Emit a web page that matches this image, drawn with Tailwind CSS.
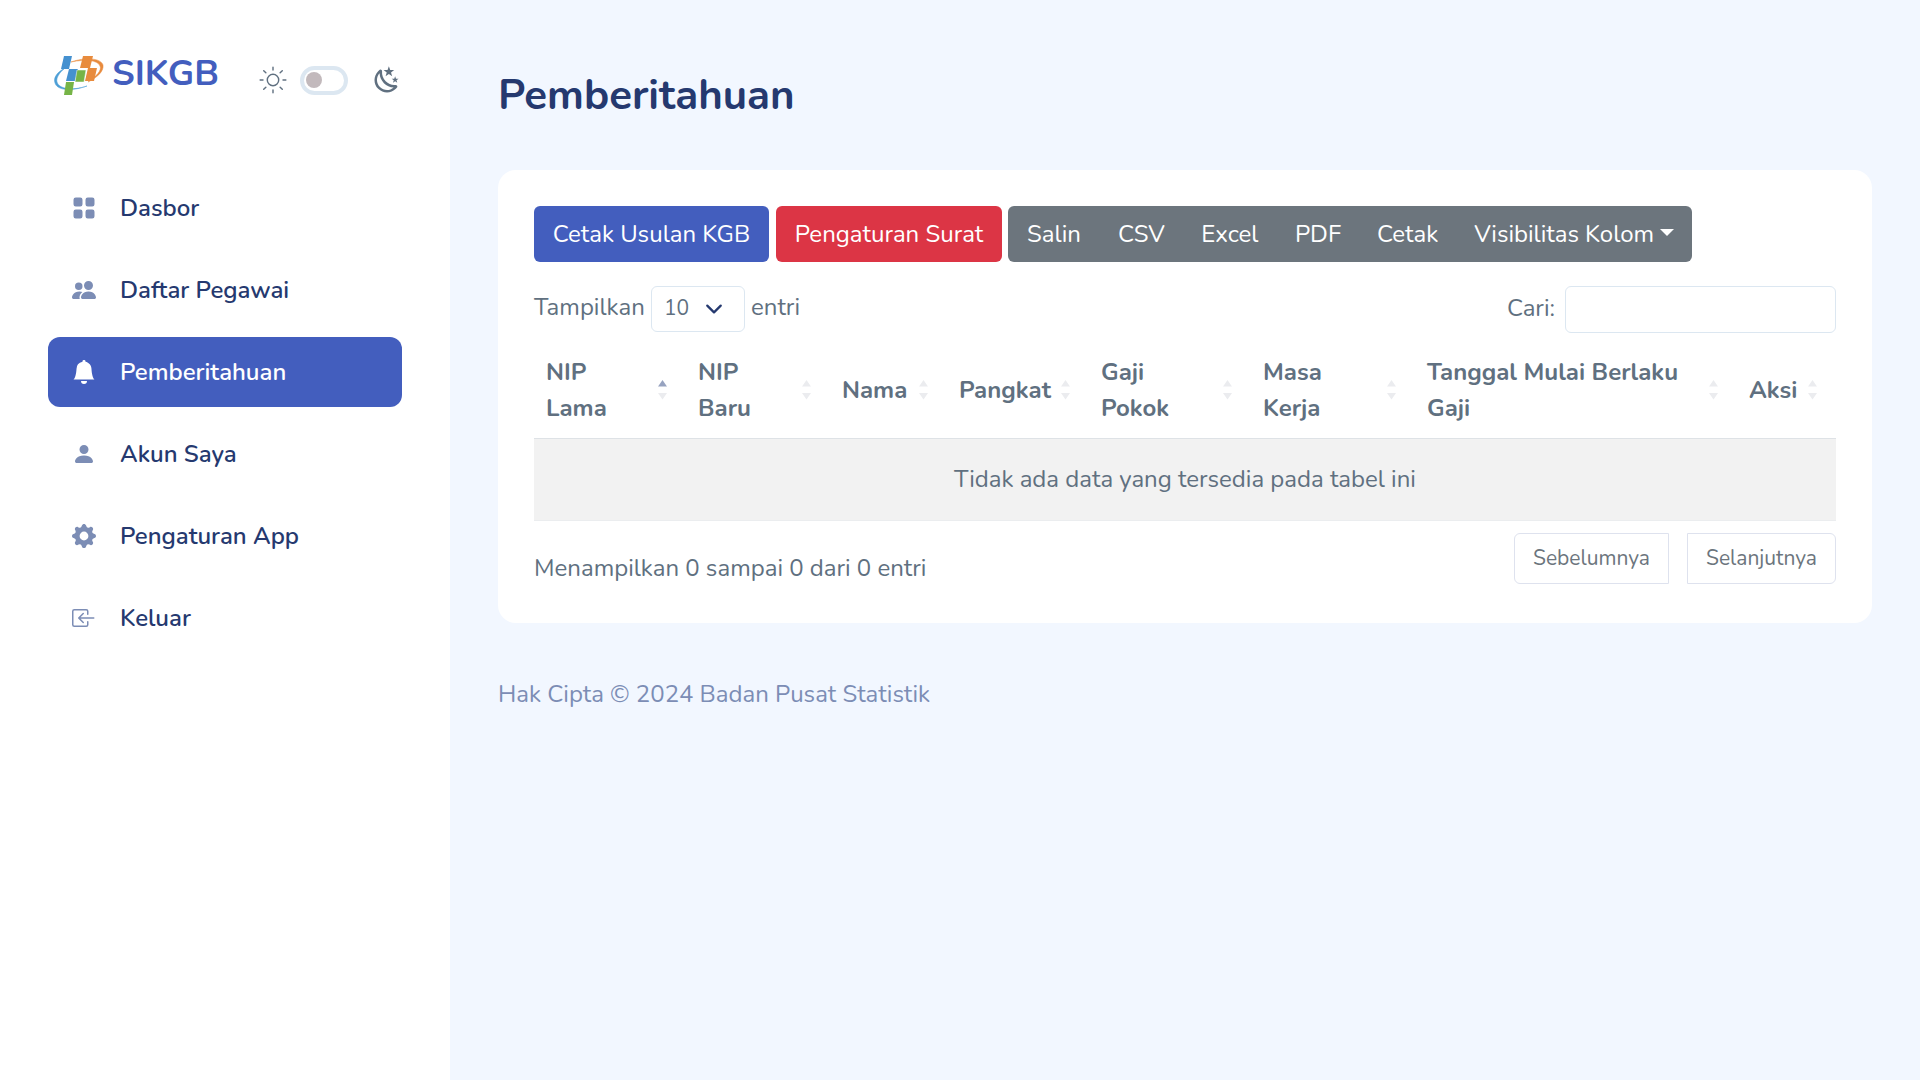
<!DOCTYPE html>
<html lang="id">
<head>
    <meta charset="UTF-8">
    <meta name="viewport" content="width=device-width, initial-scale=1.0">
    <title>Pemberitahuan - SIKGB</title>
    <script src="https://cdn.jsdelivr.net/npm/@tailwindcss/browser@4"></script>
</head>
<body class="bg-[#f2f7ff] font-['Nunito','Lato',sans-serif] text-2xl leading-9 text-[#607080]">

    <div class="flex min-h-screen">
        <!-- Sidebar -->
        <aside class="w-[450px] shrink-0 bg-white px-12 pt-12">
            <div class="flex h-16 items-center">
                <a href="#" class="flex items-end gap-2 self-start pt-1 pl-[6px] text-4xl leading-[44px] font-bold text-[#435ebe]">
                    <svg class="h-10 w-[50px]" viewBox="0 0 50 40">
                        <path d="M11 12C3 16-1 22 1 27c2 7 15 9 32 3C18 35 5 33 3 26c-1-4 2-9 8-14z" fill="#4d9fd6" stroke="#4d9fd6" stroke-width=".5"/>
                        <path d="M17 6c14-5 30-4 32 3 1 6-5 12-15 17 9-6 14-12 12-16C44 4 31 3 17 6z" fill="#e88b3d" stroke="#e88b3d" stroke-width=".5"/>
                        <path d="M10 0h8l-3 13H7z" fill="#4591d0"/>
                        <path d="M15 13h9l-3 12h-9z" fill="#4591d0"/>
                        <path d="M29 0h10l-3 12H26z" fill="#e88b3d"/>
                        <path d="M34 12h9l-3 13h-9z" fill="#e88b3d"/>
                        <path d="M23 14h9l-2 12h-9z" fill="#76b447" stroke="#fff" stroke-width=".5"/>
                        <path d="M12 26h8l-2 13h-8z" fill="#76b447"/>
                    </svg>
                    <span>SIKGB</span>
                </a>
                <div class="ml-auto flex items-center">
                    <svg class="size-[30px]" viewBox="0 0 21 21" fill="none" stroke="currentColor" stroke-linecap="round" stroke-linejoin="round">
                        <circle cx="10.5" cy="10.5" r="4"/>
                        <path d="M10.5 1.5v2M17 4l-1.5 1.5M4 4l1.5 1.5M10.5 19.5v-2M17 17l-1.5-1.5M4 17l1.5-1.5M1.5 10.5h2M17.5 10.5h2"/>
                    </svg>
                    <label class="mx-3 flex">
                        <input type="checkbox" class="peer sr-only" aria-label="Mode gelap">
                        <span class="flex h-[29px] w-12 items-center rounded-full border-4 border-[#dce7f1] px-[2px] peer-checked:justify-end">
                            <span class="size-4 rounded-full bg-[#c2b9bc]"></span>
                        </span>
                    </label>
                    <svg class="ml-3 size-[30px]" viewBox="0 0 24 24" fill="currentColor">
                        <path d="m17.75 4.09l-2.53 1.94l.91 3.06l-2.63-1.81l-2.63 1.81l.91-3.06l-2.53-1.94L12.44 4l1.06-3l1.06 3l3.19.09m3.5 6.91l-1.64 1.25l.59 1.98l-1.7-1.17l-1.7 1.17l.59-1.98L15.75 11l2.06-.05L18.5 9l.69 1.95l2.06.05m-2.28 4.95c.83-.08 1.72 1.1 1.19 1.85c-.32.45-.66.87-1.08 1.27C15.17 23 8.84 23 4.94 19.07c-3.91-3.9-3.91-10.24 0-14.14c.4-.4.82-.76 1.27-1.08c.75-.53 1.93.36 1.85 1.19c-.27 2.86.69 5.83 2.89 8.02a9.96 9.96 0 0 0 8.02 2.89m-1.64 2.02a12.08 12.08 0 0 1-7.8-3.47c-2.17-2.19-3.33-5-3.49-7.82c-2.81 3.14-2.7 7.96.31 10.98c3.02 3.01 7.84 3.12 10.98.31z"/>
                    </svg>
                </div>
            </div>

            <nav class="mt-[61px] flex flex-col gap-3 font-semibold text-[#25396f]">
                <a href="#" class="flex h-[70px] items-center gap-6 rounded-xl px-6">
                    <svg class="size-6 text-[#7c8db5]" viewBox="0 0 16 16" fill="currentColor"><path d="M1 2.5A1.5 1.5 0 0 1 2.5 1h3A1.5 1.5 0 0 1 7 2.5v3A1.5 1.5 0 0 1 5.5 7h-3A1.5 1.5 0 0 1 1 5.5zm8 0A1.5 1.5 0 0 1 10.5 1h3A1.5 1.5 0 0 1 15 2.5v3A1.5 1.5 0 0 1 13.5 7h-3A1.5 1.5 0 0 1 9 5.5zm-8 8A1.5 1.5 0 0 1 2.5 9h3A1.5 1.5 0 0 1 7 10.5v3A1.5 1.5 0 0 1 5.5 15h-3A1.5 1.5 0 0 1 1 13.5zm8 0A1.5 1.5 0 0 1 10.5 9h3a1.5 1.5 0 0 1 1.5 1.5v3a1.5 1.5 0 0 1-1.5 1.5h-3A1.5 1.5 0 0 1 9 13.5z"/></svg>
                    <span>Dasbor</span>
                </a>
                <a href="#" class="flex h-[70px] items-center gap-6 rounded-xl px-6">
                    <svg class="size-6 text-[#7c8db5]" viewBox="0 0 16 16" fill="currentColor"><path d="M7 14s-1 0-1-1 1-4 5-4 5 3 5 4-1 1-1 1zm4-6a3 3 0 1 0 0-6 3 3 0 0 0 0 6m-5.784 6A2.24 2.24 0 0 1 5 13c0-1.355.68-2.75 1.936-3.72A6.3 6.3 0 0 0 5 9c-4 0-5 3-5 4s1 1 1 1zM4.5 8a2.5 2.5 0 1 0 0-5 2.5 2.5 0 0 0 0 5"/></svg>
                    <span>Daftar Pegawai</span>
                </a>
                <a href="#" class="flex h-[70px] items-center gap-6 rounded-xl bg-[#435ebe] px-6 text-white">
                    <svg class="size-6" viewBox="0 0 16 16" fill="currentColor"><path d="M8 16a2 2 0 0 0 2-2H6a2 2 0 0 0 2 2m.995-14.901a1 1 0 1 0-1.99 0A5 5 0 0 0 3 6c0 1.098-.5 6-2 7h14c-1.5-1-2-5.902-2-7 0-2.42-1.72-4.44-4.005-4.901"/></svg>
                    <span>Pemberitahuan</span>
                </a>
                <a href="#" class="flex h-[70px] items-center gap-6 rounded-xl px-6">
                    <svg class="size-6 text-[#7c8db5]" viewBox="0 0 16 16" fill="currentColor"><path d="M3 14s-1 0-1-1 1-4 6-4 6 3 6 4-1 1-1 1zm5-6a3 3 0 1 0 0-6 3 3 0 0 0 0 6"/></svg>
                    <span>Akun Saya</span>
                </a>
                <a href="#" class="flex h-[70px] items-center gap-6 rounded-xl px-6">
                    <svg class="size-6 text-[#7c8db5]" viewBox="0 0 16 16" fill="currentColor"><path d="M9.405 1.05c-.413-1.4-2.397-1.4-2.81 0l-.1.34a1.464 1.464 0 0 1-2.105.872l-.31-.17c-1.283-.698-2.686.705-1.987 1.987l.169.311c.446.82.023 1.841-.872 2.105l-.34.1c-1.4.413-1.4 2.397 0 2.81l.34.1a1.464 1.464 0 0 1 .872 2.105l-.17.31c-.698 1.283.705 2.686 1.987 1.987l.311-.169a1.464 1.464 0 0 1 2.105.872l.1.34c.413 1.4 2.397 1.4 2.81 0l.1-.34a1.464 1.464 0 0 1 2.105-.872l.31.17c1.283.698 2.686-.705 1.987-1.987l-.169-.311a1.464 1.464 0 0 1 .872-2.105l.34-.1c1.4-.413 1.4-2.397 0-2.81l-.34-.1a1.464 1.464 0 0 1-.872-2.105l.17-.31c.698-1.283-.705-2.686-1.987-1.987l-.311.169a1.464 1.464 0 0 1-2.105-.872zM8 10.93a2.929 2.929 0 1 1 0-5.86 2.929 2.929 0 0 1 0 5.858z"/></svg>
                    <span>Pengaturan App</span>
                </a>
                <a href="#" class="flex h-[70px] items-center gap-6 rounded-xl px-6">
                    <svg class="size-6 text-[#7c8db5]" viewBox="0 0 16 16" fill="currentColor"><path d="M10 3.5a.5.5 0 0 0-.5-.5h-8a.5.5 0 0 0-.5.5v9a.5.5 0 0 0 .5.5h8a.5.5 0 0 0 .5-.5v-2a.5.5 0 0 1 1 0v2A1.5 1.5 0 0 1 9.5 14h-8A1.5 1.5 0 0 1 0 12.5v-9A1.5 1.5 0 0 1 1.5 2h8A1.5 1.5 0 0 1 11 3.5v2a.5.5 0 0 1-1 0z"/><path d="M4.146 8.354a.5.5 0 0 1 0-.708l3-3a.5.5 0 1 1 .708.708L5.707 7.5H14.5a.5.5 0 0 1 0 1H5.707l2.147 2.146a.5.5 0 0 1-.708.708z"/></svg>
                    <span>Keluar</span>
                </a>
            </nav>
        </aside>

        <!-- Main -->
        <main class="min-w-0 flex-1 px-12 pt-[70px]">
            <h1 class="text-[42px] leading-[52px] font-bold text-[#25396f]">Pemberitahuan</h1>

            <section class="mt-12 rounded-[18px] bg-white p-9 pb-[37px]">
                <div class="flex text-white">
                    <button class="h-14 min-w-[235px] rounded-md bg-[#435ebe] px-[18px]">Cetak Usulan KGB</button>
                    <button class="ml-[7px] h-14 min-w-[226px] rounded-md bg-[#dc3545] px-[18px]">Pengaturan Surat</button>
                    <div class="ml-[6px] flex h-14 rounded-md bg-[#6c757d]">
                        <button class="min-w-[92px] px-[18px]">Salin</button>
                        <button class="min-w-[82px] px-[18px]">CSV</button>
                        <button class="min-w-[94px] px-[18px]">Excel</button>
                        <button class="min-w-[82px] px-[18px]">PDF</button>
                        <button class="px-[18px]">Cetak</button>
                        <button class="flex items-center justify-center gap-[6px] px-[18px]">Visibilitas Kolom
                            <svg class="mb-1 h-[7px] w-[14px]" viewBox="0 0 14 7" fill="currentColor"><path d="M0 0h14L7 7z"/></svg>
                        </button>
                    </div>
                </div>

                <div class="mt-6 flex items-start justify-between">
                    <label class="flex items-center gap-[6px]">
                        <span class="min-w-[111px] pb-1">Tampilkan</span>
                        <span class="relative">
                            <select class="block h-[46px] w-[94px] appearance-none rounded-md border border-[#dce7f1] bg-white pb-[2px] pl-3 text-[21px] leading-8">
                                <option>10</option>
                                <option>25</option>
                                <option>50</option>
                                <option>100</option>
                            </select>
                            <svg class="pointer-events-none absolute top-[14px] right-[22px] size-[18px] text-[#25396f]" viewBox="0 0 16 16" fill="none" stroke="currentColor" stroke-width="2" stroke-linecap="round" stroke-linejoin="round"><path d="m2 5 6 6 6-6"/></svg>
                        </span>
                        <span class="pb-1">entri</span>
                    </label>
                    <label class="flex items-center gap-[10px]">
                        <span class="pb-1">Cari:</span>
                        <input type="search" class="h-[47px] w-[271px] rounded-md border border-[#dce7f1] px-3 text-[21px]">
                    </label>
                </div>

                <table class="mt-[9px] w-full table-fixed">
                    <thead>
                        <tr id="columns" class="h-24 border-b border-[#dee2e6] text-left"></tr>
                    </thead>
                    <tbody>
                        <tr class="h-[82px] border-b border-[#ebedef] bg-[#f2f2f2]">
                            <td colspan="8" class="text-center">Tidak ada data yang tersedia pada tabel ini</td>
                        </tr>
                    </tbody>
                </table>

                <div class="mt-3 flex items-start justify-between">
                    <p class="pt-[17px]">Menampilkan 0 sampai 0 dari 0 entri</p>
                    <div class="flex gap-[18px] text-[21px] leading-8 text-[#6c757d]">
                        <button class="h-[51px] min-w-[155px] rounded-l-md border border-[#dee2ee]">Sebelumnya</button>
                        <button class="h-[51px] min-w-[149px] rounded-r-md border border-[#dee2ee]">Selanjutnya</button>
                    </div>
                </div>
            </section>

            <footer class="py-[53px] text-[#7c8db5]">Hak Cipta © 2024 Badan Pusat Statistik</footer>
        </main>
    </div>

    <script>
        // width is each column's share of the 1302 unit wide table
        const columns = [
            { title: 'NIP<br>Lama', width: 152, sorted: true },
            { title: 'NIP<br>Baru', width: 144 },
            { title: 'Nama', width: 117 },
            { title: 'Pangkat', width: 142 },
            { title: 'Gaji<br>Pokok', width: 162 },
            { title: 'Masa<br>Kerja', width: 164 },
            { title: 'Tanggal Mulai Berlaku<br>Gaji', width: 322 },
            { title: 'Aksi', width: 99 },
        ];

        document.getElementById('columns').innerHTML = columns.map(col => `
            <th scope="col" class="pl-3" style="width: ${col.width / 1302 * 100}%">
                <div class="flex items-center justify-between pr-[19px]">
                    <span class="whitespace-nowrap">${col.title}</span>
                    <svg class="h-5 w-[9px] shrink-0" viewBox="0 0 9 20">
                        <path d="M0 6.5h9L4.5 0z" fill="${col.sorted ? '#97a3c0' : '#ebecef'}"/>
                        <path d="M0 13h9l-4.5 6.5z" fill="#ebecef"/>
                    </svg>
                </div>
            </th>
        `).join('');
    </script>
</body>
</html>
